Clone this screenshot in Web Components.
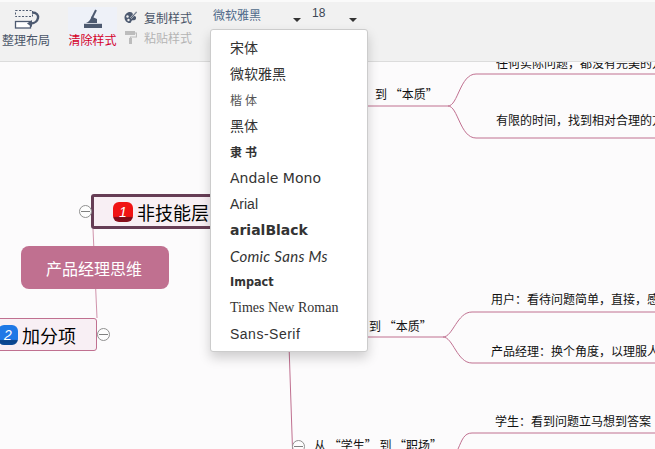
<!DOCTYPE html>
<html>
<head>
<meta charset="utf-8">
<style>
  html, body { margin: 0; height: 100%; overflow: hidden; background: #fdfdfd; }
  body { font-family: "Noto Sans CJK SC", "Liberation Sans", sans-serif; }
</style>
</head>
<body>
<mind-app></mind-app>
<script>
class ToolBig extends HTMLElement {
  constructor() {
    super();
    this.attachShadow({ mode: "open" });
    this.shadowRoot.innerHTML = `
      <style>
        :host { display: flex; flex-direction: column; align-items: center; height: 41px; margin-top: 5px; padding-top: 1px; box-sizing: border-box; font-size: 12px; line-height: 16px; color: #4a5568; white-space: nowrap; }
        :host([active]) { background: #eef1f8; color: #d4002a; }
        .ic { height: 22px; margin-bottom: 2px; }
      </style>
      <div class="ic"><slot name="icon"></slot></div>
      <slot></slot>`;
  }
}

class ToolSmall extends HTMLElement {
  constructor() {
    super();
    this.attachShadow({ mode: "open" });
    this.shadowRoot.innerHTML = `
      <style>
        :host { display: flex; align-items: center; gap: 7px; height: 20px; font-size: 12px; color: #4a5568; }
        :host([disabled]) { color: #b4b4b4; }
      </style>
      <slot name="icon"></slot><slot></slot>`;
  }
}

class ToolSelect extends HTMLElement {
  constructor() {
    super();
    this.attachShadow({ mode: "open" });
    this.shadowRoot.innerHTML = `
      <style>
        :host { display: block; position: relative; height: 25px; box-sizing: border-box; padding: 4px 0 0 5px; font-size: 12px; line-height: 18px; color: #4f6a8a; background: #f1f1f1; }
        i { position: absolute; right: 4px; top: 16px; border: 4px solid transparent; border-top: 4px solid #333; border-bottom: 0; }
      </style>
      <slot></slot><i></i>`;
  }
}

class AppToolbar extends HTMLElement {
  constructor() {
    super();
    this.attachShadow({ mode: "open" });
    this.shadowRoot.innerHTML = `
      <style>
        :host { display: grid; grid-template-columns: 52px 16px 49px 91px 97px 56px; height: 60px; box-sizing: border-box; background: #f1f1f1; border-bottom: 1px solid #dcdcdc; align-items: start; }
        .stack { display: flex; flex-direction: column; padding: 5px 0 0 7px; }
        .size { color: #3c4654; font-family: "Liberation Sans", sans-serif; padding: 2px 0 0 7px; }
      </style>
      <tool-big>
        <svg slot="icon" width="28" height="22" viewBox="0 0 28 22" fill="none">
          <rect x="3.500" y="2.500" width="17" height="6" stroke="#4d5a70" stroke-dasharray="2 1.500"/>
          <rect x="3.500" y="13.500" width="15" height="6.500" fill="#fff" stroke="#4d5a70" stroke-width="1.300"/>
          <path d="M20 4.500c5 0 6.500 3 6 5.500s-3 5.500-7 5.500" stroke="#4d5a70" stroke-width="2.400"/>
          <path d="M20 12l-5 3.500 5 3.500z" fill="#4d5a70"/>
        </svg>
        整理布局
      </tool-big>
      <span></span>
      <tool-big active>
        <svg slot="icon" width="29" height="22" viewBox="0 0 29 22">
          <path d="M18 2l-4 8" stroke="#4d5a70" stroke-width="2"/>
          <path d="M13.500 8.500l5.500 2.500v4H8c3-.8 4.500-3.500 5.500-6.500z" fill="#4d5a70"/>
          <path d="M6 15.800h18V20H6z" fill="#4d5a70"/>
        </svg>
        清除样式
      </tool-big>
      <div class="stack">
        <tool-small>
          <svg slot="icon" width="13" height="14" viewBox="0 0 13 14"><path d="M6 2C3 2 .5 4.500.5 7.500s2.500 5.500 5 5.500c2 0 1.500-2 2.500-2.500s3.500.5 4-2-1-2-2.500-3C8.500 5 9.500 2 6 2z" fill="#4d5a70"/><circle cx="3.500" cy="6.500" r="1.200" fill="#f1f1f1"/><circle cx="4.500" cy="10" r="1.200" fill="#f1f1f1"/><path d="M12.500 1L6.500 7.500l1 1 5.500-6z" fill="#4d5a70" stroke="#f1f1f1" stroke-width=".6"/></svg>
          复制样式
        </tool-small>
        <tool-small disabled>
          <svg slot="icon" width="13" height="14" viewBox="0 0 13 14"><path d="M1 1h10v4H1z" fill="#bcbcbc"/><path d="M11 3h1.500v4H6.500v1" fill="none" stroke="#bcbcbc" stroke-width="1.200"/><path d="M5 8h3v6H5z" fill="#bcbcbc"/></svg>
          粘贴样式
        </tool-small>
      </div>
      <tool-select>微软雅黑</tool-select>
      <tool-select class="size">18</tool-select>`;
  }
}

class MenuItem extends HTMLElement {
  constructor() {
    super();
    this.attachShadow({ mode: "open" });
    this.shadowRoot.innerHTML = `
      <style>
        :host { display: block; height: 26px; line-height: 26px; padding-left: 19px; font-size: 14px; color: #333; white-space: nowrap; }
      </style>
      <slot></slot>`;
  }
}

class FontMenu extends HTMLElement {
  constructor() {
    super();
    this.attachShadow({ mode: "open" });
    this.shadowRoot.innerHTML = `
      <style>
        :host { display: block; position: absolute; left: 210px; top: 29px; width: 158px; height: 323px; padding-top: 5px; box-sizing: border-box; background: #fff; border-radius: 3px; border: 1px solid #ccc; box-shadow: 0 6px 12px rgba(0,0,0,.18); z-index: 5; }
      </style>
      <slot></slot>`;
  }
}

class MapNode extends HTMLElement {
  constructor() {
    super();
    this.attachShadow({ mode: "open" });
    this.shadowRoot.innerHTML = `
      <style>
        :host { display: flex; align-items: center; position: absolute; box-sizing: border-box; white-space: nowrap; color: #111; font-size: 12px; line-height: 16px; }
        :host([kind="root"]) { justify-content: center; background: #c07090; color: #fff; border-radius: 8px; font-size: 16px; padding-right: 2px; }
        :host([kind="main"]) { justify-content: flex-start; background: #f8eff4; border-radius: 3px; font-size: 18px; color: #000; }
      </style>
      <slot></slot>`;
  }
}

class NumBadge extends HTMLElement {
  constructor() {
    super();
    this.attachShadow({ mode: "open" });
    this.shadowRoot.innerHTML = `
      <style>
        :host { display: inline-flex; align-items: center; justify-content: center; width: 20px; height: 20px; border-radius: 6px; color: #fff; font: italic 14px "Liberation Sans", sans-serif; background: linear-gradient(#1f78e6 0 72%, #0b4288 78%, #0b4a98 100%); flex: none; }
        :host([red]) { background: linear-gradient(#f01414 0 72%, #7e0c18 78%, #8c0e1c 100%); }
      </style>
      <slot></slot>`;
  }
}

class FoldMark extends HTMLElement {
  constructor() {
    super();
    this.attachShadow({ mode: "open" });
    this.shadowRoot.innerHTML = `
      <style>
        :host { display: block; position: absolute; width: 13px; height: 13px; box-sizing: border-box; border: 1px solid #909090; border-radius: 50%; background: #fdfdfd; }
        i { position: absolute; left: 1px; right: 1px; top: 5px; height: 1px; background: #808080; }
      </style>
      <i></i>`;
  }
}

class MindCanvas extends HTMLElement {
  constructor() {
    super();
    this.attachShadow({ mode: "open" });
    this.shadowRoot.innerHTML = `
      <style>
        :host { display: block; position: absolute; left: 0; top: 0; width: 655px; height: 449px; overflow: hidden; background: #fcfbfc; }
        svg { position: absolute; left: 0; top: 0; }
        path { fill: none; stroke: #c07090; stroke-width: 1; }
      </style>
      <svg width="655" height="449">
        <path d="M93 229L97 318" stroke-opacity=".75"/>
        <path d="M288.500 330L292.500 449"/>
        <path d="M290 106H448C458 106 460 74 476 74H655"/>
        <path d="M448 106C458 106 460 138 476 138H655"/>
        <path d="M290 337H443C453 337 457 312 472 312H655"/>
        <path d="M443 337C453 337 457 363 472 363H655"/>
        <path d="M458 449C462 440 464 433 472 433H655"/>
      </svg>
      <slot></slot>`;
  }
}

class MindApp extends HTMLElement {
  constructor() {
    super();
    this.attachShadow({ mode: "open" });
    this.shadowRoot.innerHTML = `
      <style>
        :host { display: block; position: relative; width: 655px; height: 449px; overflow: hidden; }
        .lift { position: absolute; left: 0; right: 0; top: 0; }
        .top { height: 2px; background: #fafafa; }
      </style>
      <mind-canvas>
        <map-node kind="root" style="left:21px;top:246px;width:148px;height:43px">产品经理思维</map-node>
        <map-node kind="main" style="left:91px;top:194px;width:130px;height:35px;border:3px solid #663d55;padding-left:19px;gap:4px"><num-badge red>1</num-badge>非技能层</map-node>
        <map-node kind="main" style="left:-20px;top:318px;width:117px;height:33px;border:1px solid #c07090;padding-left:17px;gap:4px"><num-badge>2</num-badge>加分项</map-node>
        <fold-mark style="left:79px;top:205px"></fold-mark>
        <fold-mark style="left:97px;top:328px"></fold-mark>
        <fold-mark style="left:292px;top:440px"></fold-mark>
        <map-node style="left:375px;top:86px">到 “本质”</map-node>
        <map-node style="left:369px;top:318px">到 “本质”</map-node>
        <map-node style="left:496px;top:55px">任何实际问题，都没有完美的方案</map-node>
        <map-node style="left:496px;top:112px">有限的时间，找到相对合理的方案</map-node>
        <map-node style="left:491px;top:291px">用户：看待问题简单，直接，感性</map-node>
        <map-node style="left:491px;top:343px">产品经理：换个角度，以理服人</map-node>
        <map-node style="left:495px;top:413px">学生：看到问题立马想到答案</map-node>
        <map-node style="left:314px;top:437px">从 “学生” 到 “职场”</map-node>
      </mind-canvas>
      <div class="lift"><div class="top"></div><app-toolbar></app-toolbar></div>
      <font-menu>
        <menu-item style="line-height:24px">宋体</menu-item>
        <menu-item style="line-height:24px">微软雅黑</menu-item>
        <menu-item style="font-size:12px;letter-spacing:3px;color:#555">楷体</menu-item>
        <menu-item style="line-height:24px">黑体</menu-item>
        <menu-item style="font-size:12px;letter-spacing:3px;font-weight:700">隶书</menu-item>
        <menu-item style="font-family:'DejaVu Sans',sans-serif">Andale Mono</menu-item>
        <menu-item style="font-family:'Liberation Sans',sans-serif">Arial</menu-item>
        <menu-item style="font-family:'DejaVu Sans',sans-serif;font-weight:700">arialBlack</menu-item>
        <menu-item style="font-family:'Lato',sans-serif;font-style:italic;font-size:15px;letter-spacing:.3px">Comic Sans Ms</menu-item>
        <menu-item style="font-family:'DejaVu Sans Condensed','Liberation Sans Narrow',sans-serif;font-weight:700;font-size:12.500px">Impact</menu-item>
        <menu-item style="font-family:'Liberation Serif',serif">Times New Roman</menu-item>
        <menu-item style="font-family:'Liberation Sans',sans-serif;letter-spacing:.5px">Sans-Serif</menu-item>
      </font-menu>`;
  }
}

customElements.define("tool-big", ToolBig);
customElements.define("tool-small", ToolSmall);
customElements.define("tool-select", ToolSelect);
customElements.define("app-toolbar", AppToolbar);
customElements.define("menu-item", MenuItem);
customElements.define("font-menu", FontMenu);
customElements.define("map-node", MapNode);
customElements.define("num-badge", NumBadge);
customElements.define("fold-mark", FoldMark);
customElements.define("mind-canvas", MindCanvas);
customElements.define("mind-app", MindApp);
</script>
</body>
</html>
